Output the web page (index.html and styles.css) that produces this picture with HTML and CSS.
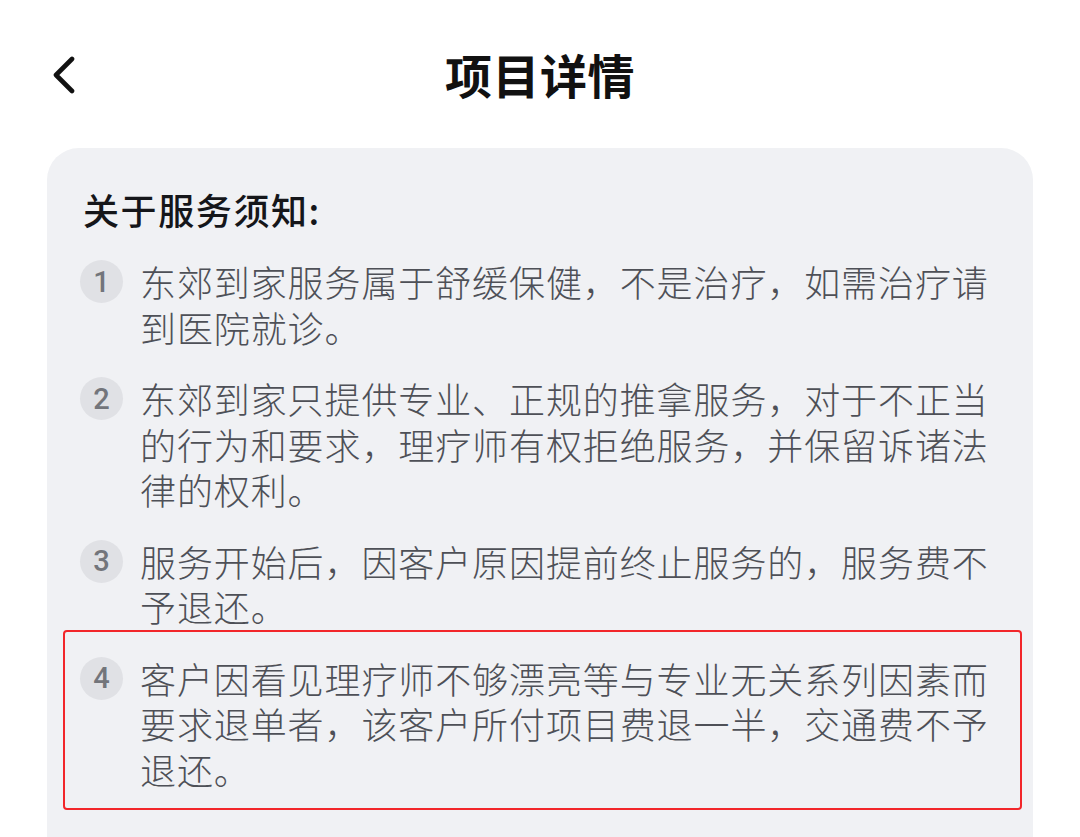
FILE: index.html
```html
<!DOCTYPE html>
<html lang="zh-CN">
<head>
<meta charset="utf-8">
<title>项目详情</title>
<link rel="stylesheet" href="styles.css">
</head>
<body>
<header class="topbar">
  <button class="back" aria-label="返回">
    <svg width="28" height="40" viewBox="0 0 28 40" fill="none">
      <path d="M21 3 L5 19 L21 35" stroke="#111" stroke-width="4.6" stroke-linecap="round" stroke-linejoin="round"/>
    </svg>
  </button>
  <h1 class="title">项目详情</h1>
</header>
<main class="card">
  <h2 class="heading">关于服务须知:</h2>
  <ol class="notes">
    <li class="note"><span class="num">1</span><p class="text">东郊到家服务属于舒缓保健，不是治疗，如需治疗请到医院就诊。</p></li>
    <li class="note"><span class="num">2</span><p class="text">东郊到家只提供专业、正规的推拿服务，对于不正当的行为和要求，理疗师有权拒绝服务，并保留诉诸法律的权利。</p></li>
    <li class="note"><span class="num">3</span><p class="text">服务开始后，因客户原因提前终止服务的，服务费不予退还。</p></li>
    <li class="note marked"><span class="num">4</span><p class="text">客户因看见理疗师不够漂亮等与专业无关系列因素而要求退单者，该客户所付项目费退一半，交通费不予退还。</p></li>
  </ol>
</main>
</body>
</html>
```
FILE: styles.css
```css
* { box-sizing: border-box; }
html, body { margin: 0; padding: 0; background: #ffffff; }
body {
  width: 1080px;
  height: 837px;
  overflow: hidden;
  font-family: "Noto Sans CJK SC", "Noto Sans", sans-serif;
}
.topbar {
  position: relative;
  height: 148px;
  padding-top: 46px;
}
.back {
  position: absolute;
  left: 51px;
  top: 56px;
  border: 0;
  background: none;
  padding: 0;
  width: 28px;
  height: 40px;
}
.back svg { display: block; }
.title {
  margin: 0;
  height: 56px;
  line-height: 56px;
  text-align: center;
  font-size: 47px;
  font-weight: 700;
  color: #111111;
  letter-spacing: 0.5px;
}
.card {
  margin: 0 47px;
  background: #f0f1f4;
  border-radius: 32px 32px 0 0;
  padding: 36px 30px 80px 33px;
  min-height: 700px;
}
.heading {
  margin: 0;
  padding-left: 3px;
  font-size: 36px;
  line-height: 50px;
  font-weight: 500;
  color: #15161a;
  letter-spacing: 1.6px;
}
.notes {
  list-style: none;
  margin: 25px 0 0 0;
  padding: 0;
  display: flex;
  flex-direction: column;
  gap: 26px;
}
.note {
  display: flex;
  align-items: flex-start;
  gap: 17px;
}
.num {
  flex: none;
  width: 43px;
  height: 43px;
  margin-top: 1px;
  border-radius: 50%;
  background: #e0e1e5;
  color: #73757b;
  font-family: Roboto, "Noto Sans", sans-serif;
  font-weight: 500;
  font-size: 29px;
  display: flex;
  align-items: center;
  justify-content: center;
}
.text {
  margin: 0;
  flex: 1;
  font-size: 36px;
  font-weight: 300;
  line-height: 45.5px;
  letter-spacing: 0.9px;
  color: #4e5057;
}
.marked { position: relative; }
.marked::after {
  content: "";
  position: absolute;
  left: -17px;
  top: -26px;
  right: -19px;
  bottom: -18px;
  border: 2.5px solid #f2262a;
  border-radius: 4px;
  pointer-events: none;
}
```
